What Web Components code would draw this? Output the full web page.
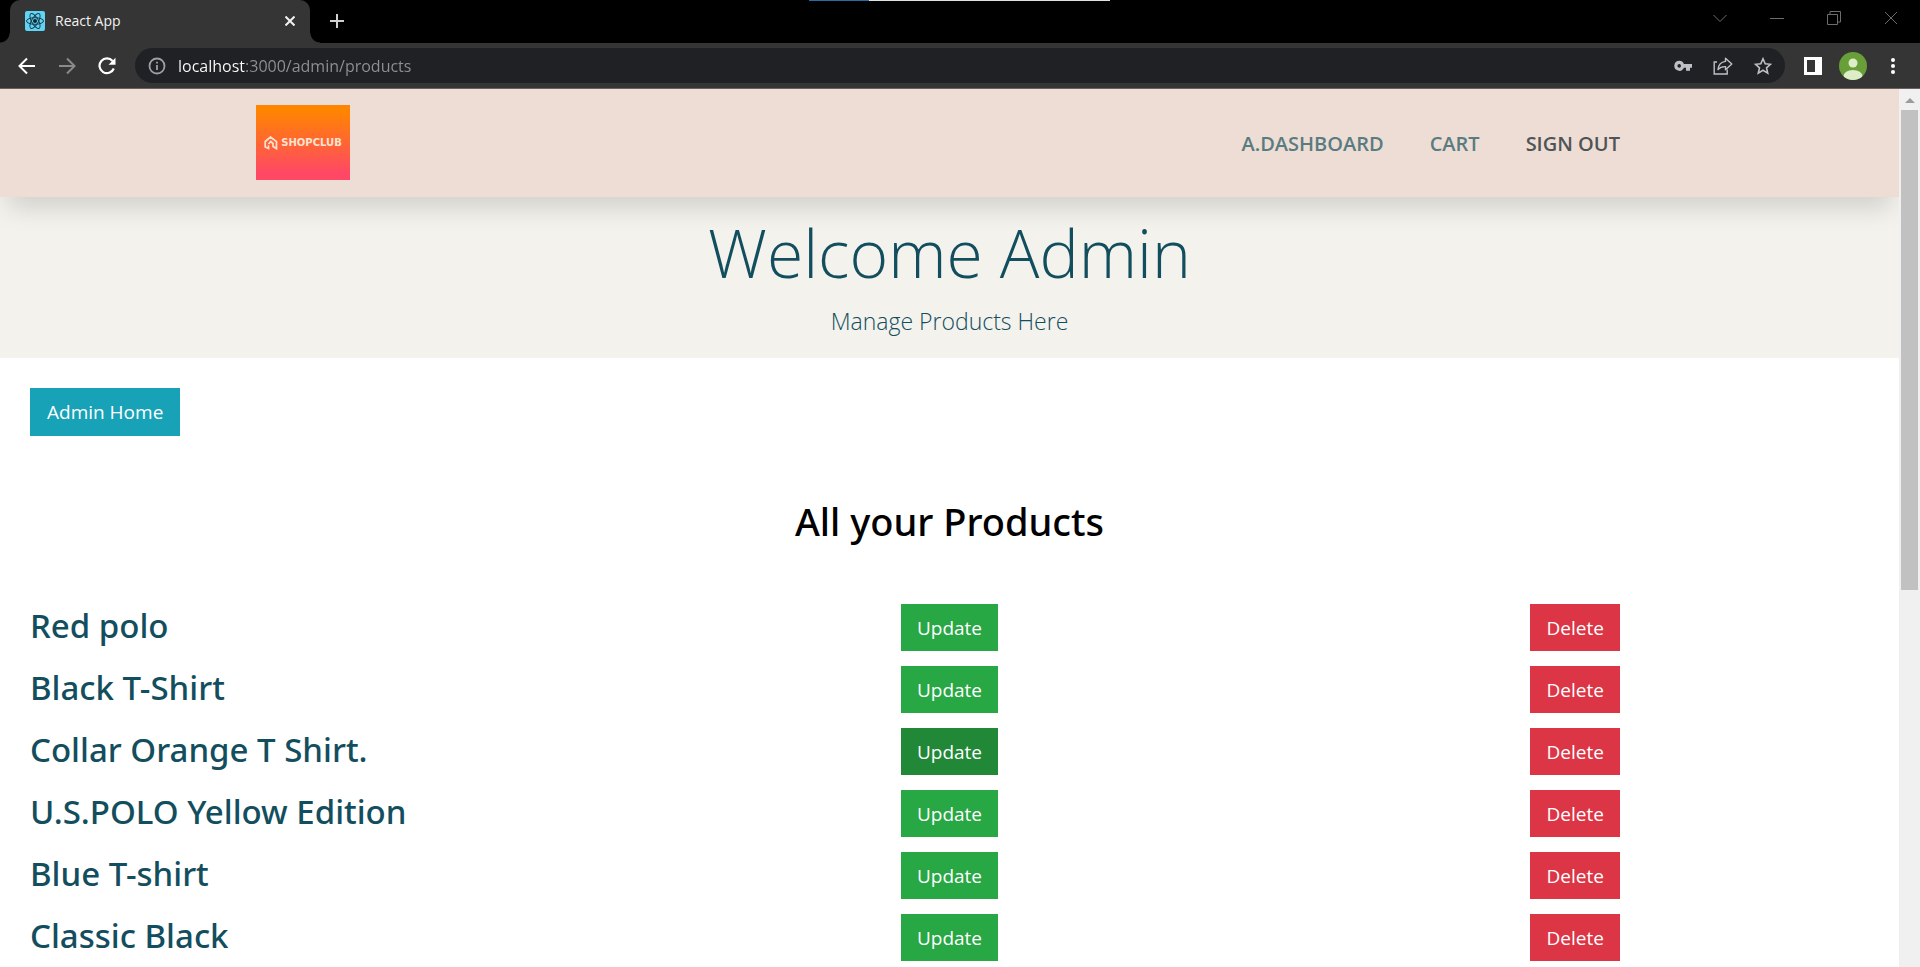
<!DOCTYPE html>
<html lang="en">
<head>
<meta charset="utf-8">
<title>React App</title>
<style>
  html, body { margin: 0; height: 100%; }
  body { font-family: "Open Sans", "Noto Sans", sans-serif; background: #fff; overflow: hidden; }
</style>
</head>
<body>
<browser-window>
  <browser-tab slot="tabs">React App</browser-tab>
  <address-bar slot="toolbar" value="localhost:3000/admin/products"></address-bar>
  <site-header>
    <nav-link href="#dashboard">A.DASHBOARD</nav-link>
    <nav-link href="#cart">CART</nav-link>
    <nav-link href="#signout" tone="dark">SIGN OUT</nav-link>
  </site-header>
  <hero-banner>
    Welcome Admin
    <span slot="description">Manage Products Here</span>
  </hero-banner>
  <product-manager>
    <product-row name="Red polo"></product-row>
    <product-row name="Black T-Shirt"></product-row>
    <product-row name="Collar Orange T Shirt." highlighted></product-row>
    <product-row name="U.S.POLO Yellow Edition"></product-row>
    <product-row name="Blue T-shirt"></product-row>
    <product-row name="Classic Black"></product-row>
  </product-manager>
</browser-window>

<script>
const define = (name, html, setup) => {
  const template = document.createElement('template');
  template.innerHTML = html;
  customElements.define(name, class extends HTMLElement {
    constructor() {
      super();
      this.attachShadow({ mode: 'open' }).append(template.content.cloneNode(true));
    }
    connectedCallback() { if (setup) setup(this, this.shadowRoot); }
  });
};

const iconButton = `
  button { display: grid; place-items: center; padding: 0; border: 0; background: none; color: inherit; }
  svg { display: block; fill: none; stroke: currentColor; }`;

define('browser-window', `
  <style>
    :host { display: flex; flex-direction: column; height: 100vh; }
    .viewport { flex: 1; min-height: 0; display: flex; }
    .page { flex: 1; min-width: 0; overflow: hidden; background: #fff; }
  </style>
  <tab-strip><slot name="tabs"></slot></tab-strip>
  <slot name="toolbar"></slot>
  <div class="viewport">
    <main class="page"><slot></slot></main>
    <scroll-track></scroll-track>
  </div>`);

define('tab-strip', `
  <style>
    :host { display: flex; position: relative; height: 43px; background: #000; color: #6d6d6d; padding: 0 1px 0 10px; }
    ${iconButton}
    .new { width: 54px; height: 42px; color: #cfcfcf; }
    .controls { margin-left: auto; display: flex; }
    .controls button { width: 57px; height: 36px; }
    .progress { position: absolute; top: 0; left: 50%; width: 301px; height: 1px; margin-left: -151px;
      background: linear-gradient(90deg, #2c6aa3 60px, #dfe4e2 60px); }
  </style>
  <slot></slot>
  <button class="new" aria-label="New tab"><svg width="16" height="16" viewBox="0 0 16 16" stroke-width="2"><path d="M8 1v14M1 8h14"/></svg></button>
  <div class="controls">
    <button aria-label="Search tabs"><svg width="14" height="14" viewBox="0 0 14 14"><path d="M.5 4l6.500 6.500L13.500 4"/></svg></button>
    <button aria-label="Minimize"><svg width="14" height="14" viewBox="0 0 14 14"><path d="M0 7.500h14"/></svg></button>
    <button aria-label="Restore"><svg width="14" height="14" viewBox="0 0 14 14"><path d="M.5 3.500h10v10h-10zM3 3V.5h10.500v10.500H11"/></svg></button>
    <button aria-label="Close"><svg width="14" height="14" viewBox="0 0 14 14"><path d="M1 1l12 12M13 1L1 13"/></svg></button>
  </div>
  <div class="progress"></div>`);

define('browser-tab', `
  <style>
    :host { box-sizing: border-box; display: flex; align-items: center; position: relative; width: 300px; height: 43px;
      padding: 0 10px 1px 15px; gap: 10px; background: #353535; color: #f2f2f2; border-radius: 10px 10px 0 0;
      font-size: 14px; line-height: 20px; }
    :host::before, :host::after { content: ""; position: absolute; bottom: 0; width: 10px; height: 10px; }
    :host::before { right: 100%; background: radial-gradient(circle at 0 0, #000 9px, #353535 10px); }
    :host::after { left: 100%; background: radial-gradient(circle at 100% 0, #000 9px, #353535 10px); }
    .title { flex: 1; }
    ${iconButton}
    button { width: 20px; height: 20px; }
  </style>
  <svg width="20" height="20" viewBox="0 0 20 20" aria-hidden="true">
    <rect width="20" height="20" rx="2" fill="#61d4f4" stroke="none"/>
    <g stroke="#173d4c" stroke-width="1">
      <ellipse cx="10" cy="10" rx="8.500" ry="3.300"/>
      <ellipse cx="10" cy="10" rx="8.500" ry="3.300" transform="rotate(60 10 10)"/>
      <ellipse cx="10" cy="10" rx="8.500" ry="3.300" transform="rotate(120 10 10)"/>
    </g>
    <circle cx="10" cy="10" r="2" fill="#123" stroke="none"/>
  </svg>
  <span class="title"><slot></slot></span>
  <button aria-label="Close tab"><svg width="10" height="10" viewBox="0 0 10 10" stroke-width="2"><path d="M.5.5l9 9M9.500.5l-9 9"/></svg></button>`);

define('address-bar', `
  <style>
    :host { display: flex; align-items: center; height: 45px; padding: 0 7px; background: #353535;
      border-bottom: 1px solid #6a605c; color: #fff; }
    ${iconButton}
    button { width: 40px; height: 34px; }
    .muted { color: #8a8a8a; }
    .pill { flex: 1; min-width: 0; display: flex; align-items: center; height: 35px; margin: 0 8px; padding: 0 2px 0 13px;
      border-radius: 18px; background: #202124; color: #bdc1c6; }
    .info { color: #9aa0a6; }
    input { flex: 1; min-width: 0; margin: 0 0 0 12px; padding: 0; border: 0; outline: 0; height: 28px;
      font: 16px/24px "Open Sans", "Noto Sans", sans-serif; color: transparent;
      background: linear-gradient(90deg, #fff 68px, #8f9195 68px); -webkit-background-clip: text; background-clip: text; }
  </style>
  <button aria-label="Back"><svg width="18" height="18" viewBox="0 0 18 18" stroke-width="2"><path d="M17 9H2M9 1.500L1.500 9L9 16.500"/></svg></button>
  <button class="muted" aria-label="Forward"><svg width="18" height="18" viewBox="0 0 18 18" stroke-width="2"><path d="M1 9h15M9 1.500L16.500 9L9 16.500"/></svg></button>
  <button aria-label="Reload"><svg width="18" height="18" viewBox="0 0 18 18" stroke-width="2.200"><path d="M15.800 11.500A7.400 7.400 0 1 1 14.600 4"/><path d="M17.500.8v7h-7z" fill="currentColor" stroke="none"/></svg></button>
  <div class="pill">
    <svg class="info" width="18" height="18" viewBox="0 0 18 18" stroke-width="1.800" aria-hidden="true"><circle cx="9" cy="9" r="7.500"/><path d="M9 8v5M9 4.800v1.800"/></svg>
    <input type="text" aria-label="Address" spellcheck="false">
    <button aria-label="Saved passwords"><svg width="18" height="12" viewBox="0 0 18 12"><path fill="currentColor" stroke="none" fill-rule="evenodd" d="M5.200.8a5 5 0 1 0 4.700 7H12v3h4v-3h2V4H9.900A5 5 0 0 0 5.200.8zm0 3.300a1.800 1.800 0 1 1 0 3.600 1.800 1.800 0 0 1 0-3.600z"/></svg></button>
    <button aria-label="Share"><svg width="20" height="18" viewBox="0 0 20 18" stroke-width="1.400"><path d="M4 5H1.200v12h13v-4.500"/><path stroke-linejoin="round" d="M12.500 1.200L18.800 7l-6.300 5.800V9.600C9 9.400 7 10.200 5 12.600 5.400 8 8 5 12.500 4.400z"/></svg></button>
    <button aria-label="Bookmark"><svg width="18" height="18" viewBox="0 0 18 18" stroke-width="1.600"><path d="M9 1.800l2.200 5 5.300.5-4 3.500 1.200 5.300L9 13.300l-4.700 2.800 1.200-5.300-4-3.500 5.300-.5z"/></svg></button>
  </div>
  <button aria-label="Side panel"><svg width="18" height="18" viewBox="0 0 18 18"><path fill="currentColor" stroke="none" fill-rule="evenodd" d="M0 0h18v18H0zM3 3v12h8V3z"/></svg></button>
  <button aria-label="Profile"><svg width="28" height="28" viewBox="0 0 28 28" stroke="none">
    <clipPath id="disc"><circle cx="14" cy="14" r="14"/></clipPath>
    <g clip-path="url(#disc)" stroke="none"><rect width="28" height="28" fill="#689f38"/><circle cx="14" cy="11" r="4.500" fill="#dcedc8"/><ellipse cx="14" cy="24" rx="9.500" ry="6" fill="#dcedc8"/></g></svg></button>
  <button aria-label="Menu"><svg width="4" height="18" viewBox="0 0 4 18"><g fill="currentColor" stroke="none"><circle cx="2" cy="3" r="2"/><circle cx="2" cy="9" r="2"/><circle cx="2" cy="15" r="2"/></g></svg></button>`,
  (el, root) => { root.querySelector('input').value = el.getAttribute('value'); });

define('scroll-track', `
  <style>
    :host { display: flex; flex-direction: column; width: 21px; background: #f0f0f0; }
    svg { display: block; flex: none; }
    .rail { flex: 1; display: flex; flex-direction: column; padding: 0 2px; }
    .thumb { height: 56%; background: #c1c1c1; }
  </style>
  <svg width="21" height="21" viewBox="0 0 21 21" aria-hidden="true"><path d="M6 14l5-5 5 5z" fill="#9c9c9c"/></svg>
  <div class="rail"><div class="thumb"></div></div>`);

define('site-header', `
  <style>
    :host { display: block; position: relative; background: #eeddd5; box-shadow: 0 18px 24px -8px rgba(0,0,0,.15); }
    .inner { box-sizing: border-box; max-width: 1425px; margin: 0 auto; padding: 16px 19px 17px;
      display: flex; align-items: center; justify-content: space-between; }
    nav { display: flex; padding-top: 3px; }
  </style>
  <div class="inner">
    <shop-logo></shop-logo>
    <nav><slot></slot></nav>
  </div>`);

define('shop-logo', `
  <style>
    :host { display: block; }
    a { display: flex; align-items: center; justify-content: center; gap: 3px; width: 94px; height: 75px;
      background: linear-gradient(#ff8500 8%, #ff4766 92%); color: #ffe3d2; text-decoration: none;
      font: 700 10px/12px "DejaVu Sans", sans-serif; }
  </style>
  <a href="#home" aria-label="SHOPCLUB">
    <svg width="14" height="14" viewBox="0 0 14 14" fill="none" stroke="currentColor" stroke-width="1.700" aria-hidden="true">
      <path d="M5 10H4.500V12.500L1.200 11V5.500L6.500 1l6 4.600v7L9 10.500V7.500L6.800 5.500 4.500 8"/>
    </svg>
    <span>SHOPCLUB</span>
  </a>`);

define('nav-link', `
  <style>
    :host { display: block; }
    a { display: block; padding: 0 23px; color: #587c80; text-decoration: none; font-size: 20px; line-height: 30px; font-weight: 600; }
    :host([tone="dark"]) a { color: #4f5456; }
  </style>
  <a><slot></slot></a>`,
  (el, root) => { root.querySelector('a').href = el.getAttribute('href'); });

define('hero-banner', `
  <style>
    :host { display: block; padding: 15px 0 21px; background: #f3f2ed; color: #134e5e; text-align: center; }
    h1 { margin: 0 0 13px; font-weight: 300; font-size: 66px; line-height: 80px; }
    p { margin: 0; font-weight: 300; font-size: 23px; line-height: 32px; }
  </style>
  <h1><slot></slot></h1>
  <p><slot name="description"></slot></p>`);

define('action-button', `
  <style>
    :host { display: block; }
    button { display: block; padding: 10px 16px 8px; border: 0; background: #28a745; color: #fff;
      font: 19px/29px "Open Sans", "Noto Sans", sans-serif; }
    :host([kind="update"][highlighted]) button { background: #218838; }
    :host([kind="delete"]) button { background: #dc3545; }
    :host([kind="home"]) button { padding: 10px 17px 9px; background: #17a2b8; }
  </style>
  <button type="button"><slot></slot></button>`);

define('product-manager', `
  <style>
    :host { display: block; padding: 30px 11px 0; }
    .top { padding-left: 19px; display: flex; }
    h2 { margin: 61px 0 59px; text-align: center; color: #000; font: 500 38px/48px "Noto Sans", sans-serif; }
    .rows { display: grid; gap: 15px; }
  </style>
  <div class="top"><action-button kind="home">Admin Home</action-button></div>
  <h2>All your Products</h2>
  <div class="rows" role="list"><slot></slot></div>`);

define('product-row', `
  <style>
    :host { display: grid; grid-template-columns: repeat(3, 1fr); align-items: center; }
    h3 { margin: 0 0 0 19px; padding-bottom: 3px; color: #134e5e; font: 500 33px/44px "Noto Sans", sans-serif; }
    action-button { justify-self: center; }
  </style>
  <h3></h3>
  <action-button kind="update">Update</action-button>
  <action-button kind="delete">Delete</action-button>`,
  (el, root) => {
    el.setAttribute('role', 'listitem');
    root.querySelector('h3').textContent = el.getAttribute('name');
    root.querySelector('[kind="update"]').toggleAttribute('highlighted', el.hasAttribute('highlighted'));
  });
</script>
</body>
</html>
